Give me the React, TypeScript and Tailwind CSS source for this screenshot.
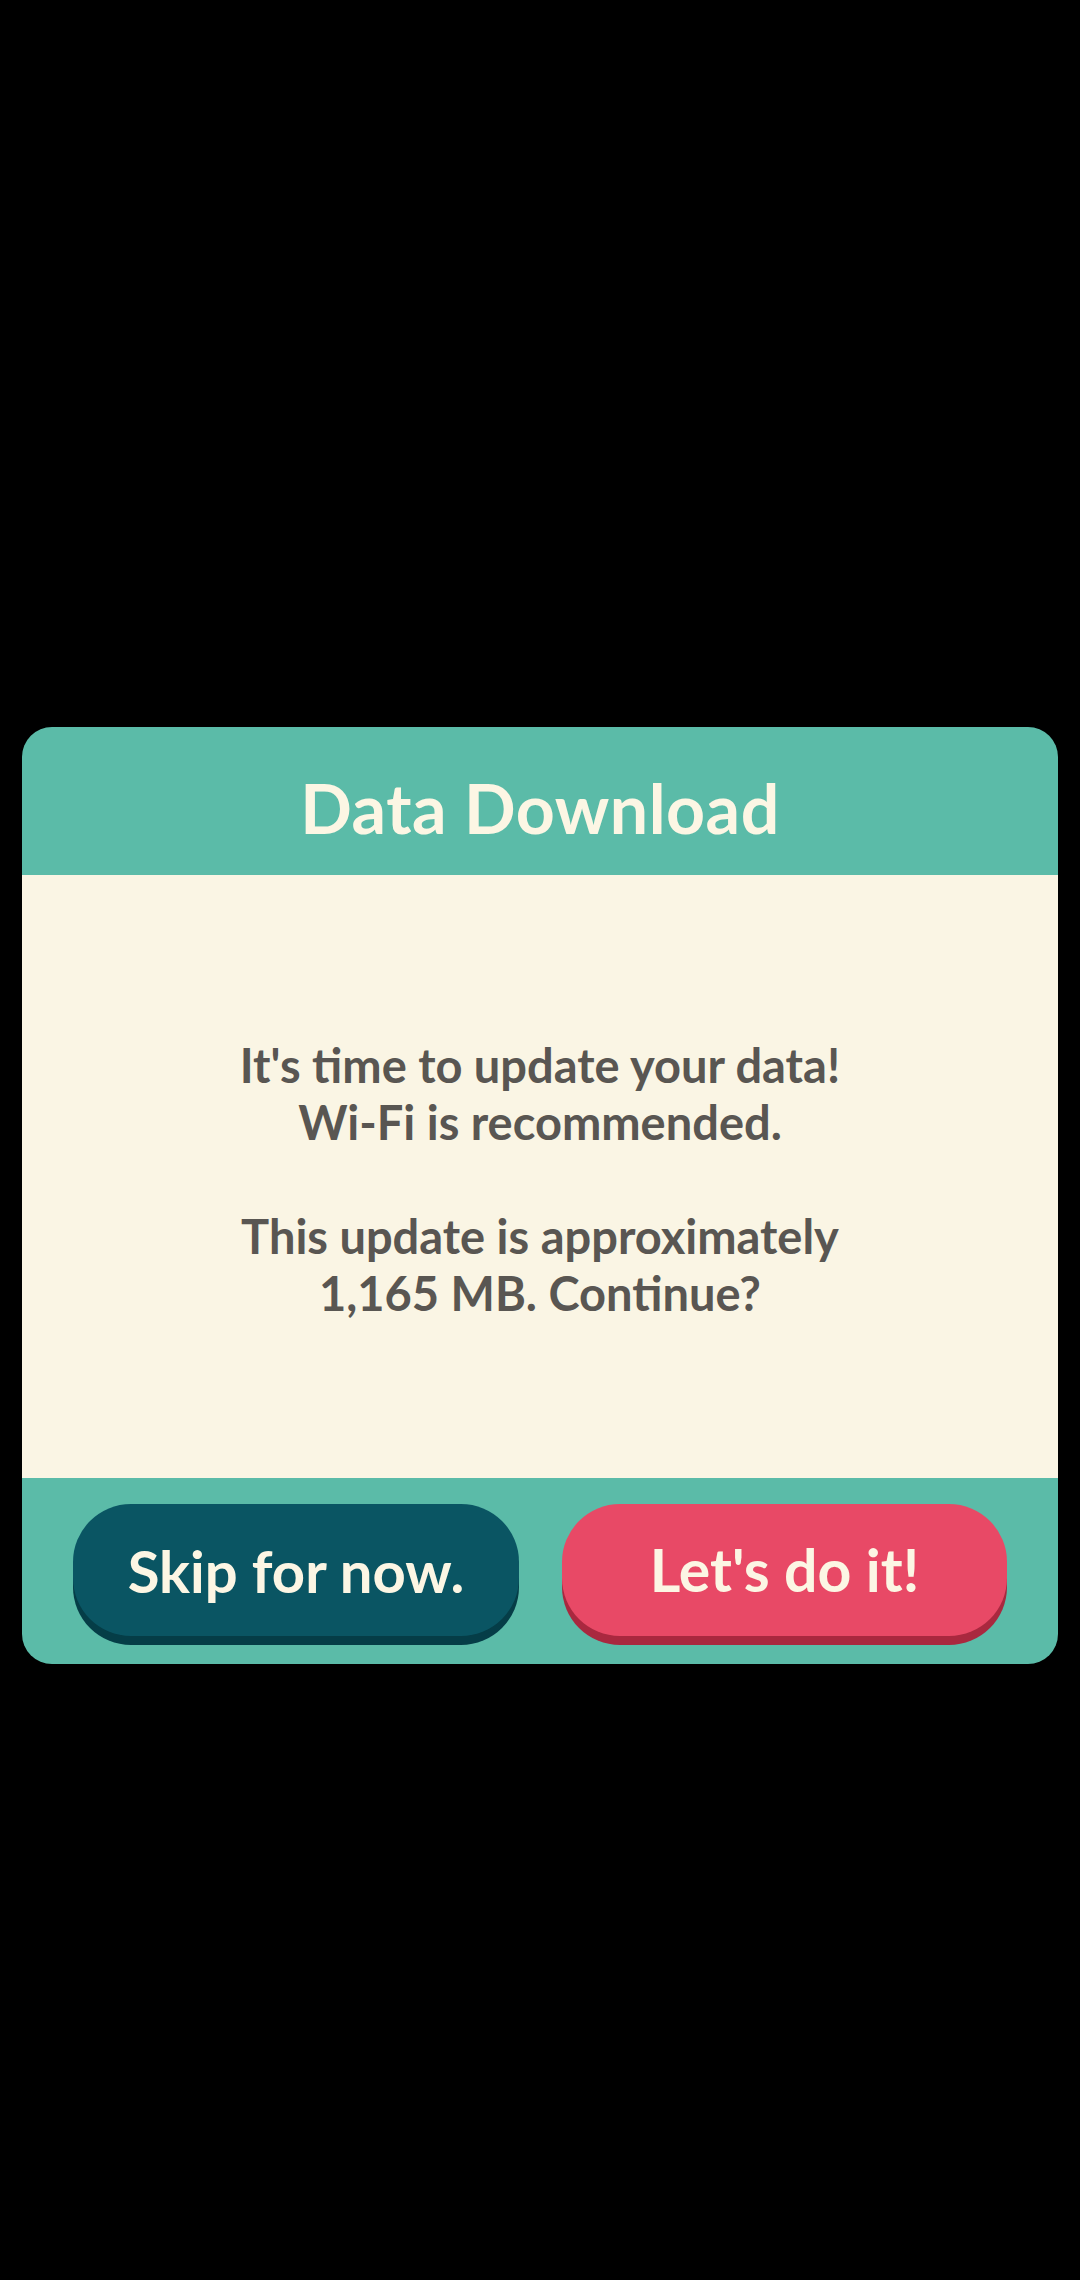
export default function App() {
  return (
    <div className="flex h-[2280px] w-[1080px] flex-col bg-black pt-[727px] font-['Lato','Open_Sans',sans-serif]">
      <div className="mx-[22px] flex h-[937px] flex-col overflow-hidden rounded-[30px] bg-[#5bbba8]">
        <div className="flex h-[148px] shrink-0 items-center justify-center pt-[14px]">
          <h1 className="text-[68px] font-bold tracking-[0.5px] text-[#fcf6e4]">
            Data Download
          </h1>
        </div>

        <div className="flex h-[603px] shrink-0 flex-col items-center justify-center bg-[#faf5e4] pt-[6px] text-center text-[47px] font-bold leading-[57px] text-[#595652]">
          <p>
            It's time to update your data!
            <br />
            Wi-Fi is recommended.
          </p>
          <p className="mt-[57px]">
            This update is approximately
            <br />
            1,165 MB. Continue?
          </p>
        </div>

        <div className="flex flex-1 items-start justify-between px-[51px] pt-[26px]">
          <button
            type="button"
            className="flex h-[132px] w-[446px] items-center justify-center rounded-[58px] bg-[#0a5563] text-[58px] font-bold text-[#fcf6e4] shadow-[0_9px_0_#053d47]"
          >
            Skip for now.
          </button>
          <button
            type="button"
            className="flex h-[132px] w-[445px] items-center justify-center rounded-[58px] bg-[#e84966] text-[59px] font-bold text-[#fcf6e4] shadow-[0_9px_0_#a9283f]"
          >
            Let's do it!
          </button>
        </div>
      </div>
    </div>
  );
}
